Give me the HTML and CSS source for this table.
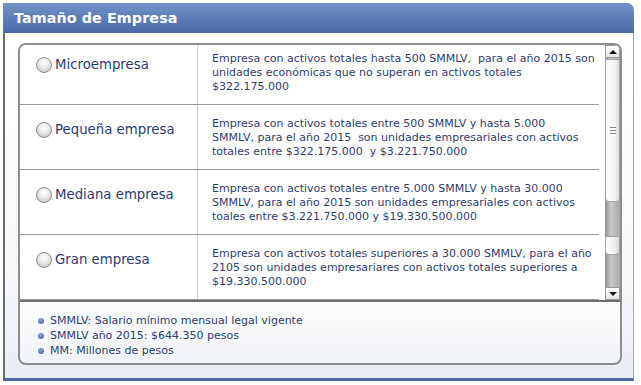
FILE: index.html
```html
<!DOCTYPE html>
<html lang="es">
<head>
<meta charset="utf-8">
<title>Tamaño de Empresa</title>
<link rel="stylesheet" href="styles.css">
</head>
<body>
<div class="panel">
  <div class="header"><h1 class="title">Tamaño de Empresa</h1></div>
  <div class="body">
    <div class="box">
      <div class="list">
        <div class="rows">
          <div class="table">
            <div class="row">
              <label class="opt"><span class="radio"></span><span class="name">Microempresa</span></label>
              <p class="desc">Empresa con activos totales hasta 500 SMMLV,&nbsp; para el año 2015 son<br>unidades económicas que no superan en activos totales<br>$322.175.000</p>
            </div>
            <div class="row">
              <label class="opt"><span class="radio"></span><span class="name">Pequeña empresa</span></label>
              <p class="desc">Empresa con activos totales entre 500 SMMLV y hasta 5.000<br>SMMLV, para el año 2015&nbsp; son unidades empresariales con activos<br>totales entre $322.175.000&nbsp; y $3.221.750.000</p>
            </div>
            <div class="row">
              <label class="opt"><span class="radio"></span><span class="name">Mediana empresa</span></label>
              <p class="desc">Empresa con activos totales entre 5.000 SMMLV y hasta 30.000<br>SMMLV, para el año 2015 son unidades empresariales con activos<br>toales entre $3.221.750.000 y $19.330.500.000</p>
            </div>
            <div class="row">
              <label class="opt"><span class="radio"></span><span class="name">Gran empresa</span></label>
              <p class="desc">Empresa con activos totales superiores a 30.000 SMMLV, para el año<br>2105 son unidades empresariares con activos totales superiores a<br>$19.330.500.000</p>
            </div>
          </div>
        </div>
        <div class="scrollbar">
          <div class="sb-btn"><span class="arrow up"></span></div>
          <div class="sb-thumb"><span class="grip"></span></div>
          <div class="sb-track">
            <div class="sb-seg"></div>
          </div>
          <div class="sb-btn"><span class="arrow down"></span></div>
        </div>
      </div>
      <ul class="notes">
        <li>SMMLV: Salario mínimo mensual legal vigente</li>
        <li>SMMLV año 2015: $644.350 pesos</li>
        <li>MM: Millones de pesos</li>
      </ul>
    </div>
  </div>
</div>
</body>
</html>
```
FILE: styles.css
```css
* { box-sizing: border-box; }
html, body { margin: 0; padding: 0; background: #ffffff; }
body { font-family: "DejaVu Sans", Verdana, sans-serif; }

.panel {
  margin: 3px 0 0 3px;
  width: 631px;
}

.header {
  height: 30px;
  background: linear-gradient(#7391c8, #4a69a8);
  border-radius: 0 7px 0 0;
  padding: 6px 0 0 11px;
}
.title {
  margin: 0;
  font-size: 14.3px;
  line-height: 18px;
  font-weight: bold;
  letter-spacing: 0.1px;
  color: #ffffff;
}

.body {
  height: 348px;
  border-left: 2px solid #6b6b6b;
  border-right: 1px solid #a8a8a8;
  border-bottom: 3px solid #4a68a6;
  background: linear-gradient(#ffffff 0%, #f7f9fb 70%, #e9eef4 100%);
  padding: 10px 12px 0 13px;
}

.box {
  width: 604px;
  height: 322px;
  border: 2px solid #8e8e8e;
  border-radius: 8px;
  background: linear-gradient(#ffffff 75%, #f1f4f8 100%);
  overflow: hidden;
}

.list {
  display: flex;
  height: 257px;
  border-bottom: 2px solid #6e6e6e;
  background: #ffffff;
}

.rows {
  width: 579px;
  overflow: hidden;
}
.table {
  margin-top: -5px;
}
.row {
  display: flex;
  height: 65px;
  border-bottom: 1px solid #9a9a9a;
}
.opt {
  width: 178px;
  border-right: 1px solid #d0d0d0;
  display: flex;
  align-items: flex-start;
  padding: 17px 0 0 16px;
  gap: 3px;
}
.radio {
  width: 16px;
  height: 16px;
  border-radius: 50%;
  border: 1px solid #8a8a8a;
  background: radial-gradient(circle at 50% 35%, #ffffff 0%, #e8e8e8 45%, #b9b9b9 100%);
  flex: none;
}
.name {
  font-size: 13.3px;
  line-height: 16px;
  color: #2c3a72;
}
.desc {
  margin: 0;
  flex: 1;
  padding: 12px 0 0 14px;
  font-size: 11px;
  line-height: 14px;
  white-space: nowrap;
  color: #2f3d6e;
}

.scrollbar {
  margin-left: 6px;
  width: 15px;
  display: flex;
  flex-direction: column;
  background: linear-gradient(90deg, #8f8f8f, #c8c8c8 40%, #a9a9a9);
}
.sb-btn {
  height: 13px;
  background: linear-gradient(#ffffff, #e4e4e4);
  border: 1px solid #9a9a9a;
  display: flex;
  align-items: center;
  justify-content: center;
}
.arrow {
  width: 0;
  height: 0;
  border-left: 4px solid transparent;
  border-right: 4px solid transparent;
}
.arrow.up { border-bottom: 4px solid #111; }
.arrow.down { border-top: 4px solid #111; }
.sb-thumb {
  height: 143px;
  margin-top: 1px;
  background: linear-gradient(90deg, #ffffff, #f2f2f2 70%, #dcdcdc);
  border: 1px solid #a3a3a3;
  border-radius: 0 0 4px 4px;
  display: flex;
  align-items: center;
  justify-content: center;
}
.grip {
  width: 6px;
  height: 7px;
  border-top: 1px solid #888;
  border-bottom: 1px solid #888;
  background: linear-gradient(transparent 2px, #888 2px, #888 3px, transparent 3px);
}
.sb-track {
  flex: 1;
  padding-top: 34px;
}
.sb-seg {
  height: 19px;
  background: linear-gradient(90deg, #ffffff, #ededed 70%, #d6d6d6);
  border: 1px solid #a3a3a3;
  border-radius: 0 0 4px 4px;
}

.notes {
  list-style: none;
  margin: 0;
  padding: 11px 0 0 18px;
}
.notes li {
  display: flex;
  align-items: center;
  gap: 6px;
  font-size: 11px;
  line-height: 15px;
  color: #2f3d6e;
}
.notes li::before {
  content: "";
  width: 6px;
  height: 6px;
  border-radius: 50%;
  background: radial-gradient(circle at 40% 35%, #8fa6d6, #3f5ea3);
  flex: none;
}
```
